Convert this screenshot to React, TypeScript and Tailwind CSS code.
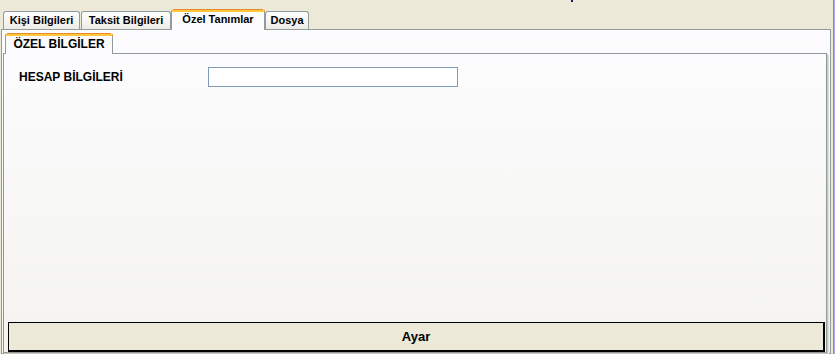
import React from 'react';

const tabs = [
  { label: 'Kişi Bilgileri', w: 'w-[77px]' },
  { label: 'Taksit Bilgileri', w: 'w-[90px]' },
  { label: 'Özel Tanımlar', w: 'w-[94px]', active: true },
  { label: 'Dosya', w: 'w-[44px]' },
];

function ActiveTab({ label, className, text }: { label: string; className: string; text: string }) {
  return (
    <div className={`flex flex-col h-[21px] ${className}`}>
      <div className="h-px mx-[2px] bg-[#E68B2C]" />
      <div className="h-[2px] bg-[#FFC73C] border-x border-[#E8A33A]" />
      <div className={`flex-1 bg-[#FCFCFE] border-x border-[#919B9C] flex justify-center ${text}`}>
        {label}
      </div>
    </div>
  );
}

export default function App() {
  return (
    <div className="relative w-[835px] h-[354px] bg-[#ECE9D8] flex overflow-hidden font-['Liberation_Sans',Arial,sans-serif] text-black">
      <span className="absolute left-[571px] top-0 w-[2px] h-[2px] bg-[#1B1A6A]" />

      <div className="w-[833px] flex flex-col">
        {/* outer tab strip */}
        <div className="relative z-10 mt-[9px] -mb-px h-[21px] flex items-end pl-[3px]">
          {tabs.map((t, i) =>
            t.active ? (
              <ActiveTab key={i} label={t.label} className={t.w} text="text-[11px] font-bold leading-[13px] pt-px" />
            ) : (
              <div
                key={i}
                className={`${t.w} ${i === 1 ? 'ml-px' : ''} h-[18px] mb-px rounded-t-[3px] border border-b-0 border-[#919B9C] bg-linear-to-b from-white to-[#ECEBE6] flex items-center justify-center text-[11px] font-bold leading-none`}
              >
                {t.label}
              </div>
            )
          )}
        </div>

        {/* outer page */}
        <div className="ml-px w-[830px] h-[330px] border border-[#919B9C] bg-linear-to-b from-[#FCFCFE] to-[#F4F3EE] pt-[3px] flex flex-col">
          <div className="relative z-10 -mb-px h-[21px] flex pl-[3px]">
            <ActiveTab label="ÖZEL BİLGİLER" className="w-[108px]" text="text-[12px] font-bold leading-[14px] pt-px" />
          </div>

          <div className="ml-px w-[824px] h-[300px] border border-[#919B9C] bg-linear-to-b from-[#FCFCFE] to-[#F4F3EE] shadow-[1px_1px_0_#C9C7BA,2px_2px_0_#E2E0D4] flex flex-col">
            <div className="mt-[13px] h-[20px] flex items-center">
              <div className="w-[204px] pl-[15px] text-[12px] font-bold leading-none">HESAP BİLGİLERİ</div>
              <input className="w-[250px] h-[20px] border border-[#7F9DB9] bg-white outline-none" />
            </div>

            <button className="mt-auto ml-[4px] w-[817px] h-[30px] bg-[#ECE9D8] border-t border-l border-r-2 border-b-2 border-black text-[13px] font-bold">
              Ayar
            </button>
          </div>
        </div>
      </div>

      <div className="w-[2px] border-l border-[#7C87D5] bg-[#A9AFE6]" />
    </div>
  );
}
